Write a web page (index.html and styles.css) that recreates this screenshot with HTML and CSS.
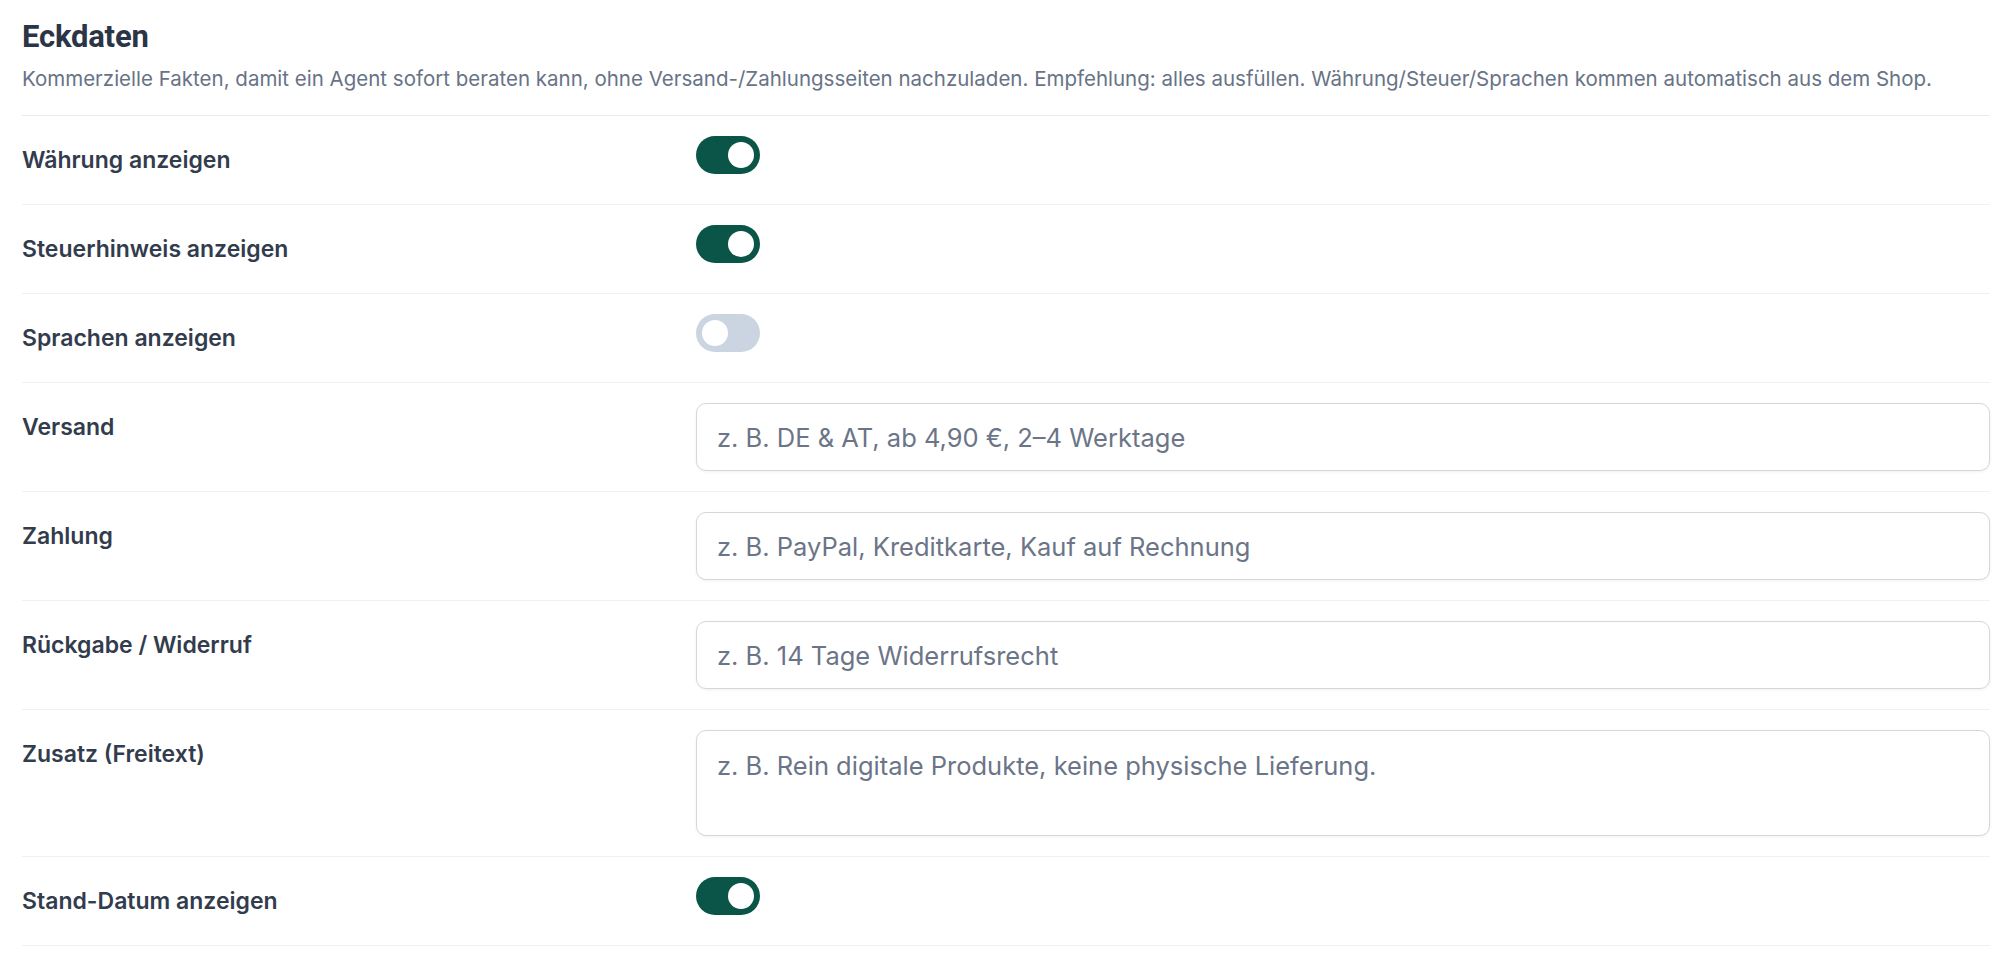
FILE: index.html
```html
<!DOCTYPE html>
<html lang="de">
<head>
    <meta charset="UTF-8">
    <meta name="viewport" content="width=device-width, initial-scale=1.0">
    <title>Eckdaten</title>
    <link rel="stylesheet" href="styles.css">
</head>
<body>
    <section class="facts">
        <div class="facts-head">
            <h2>Eckdaten</h2>
            <p class="facts-desc">Kommerzielle Fakten, damit ein Agent sofort beraten kann, ohne Versand-/Zahlungsseiten nachzuladen. Empfehlung: alles ausfüllen. Währung/Steuer/Sprachen kommen automatisch aus dem Shop.</p>
        </div>

        <div class="field-row">
            <div class="field-label">Währung anzeigen</div>
            <div class="field-control"><span class="toggle on"><span class="knob"></span></span></div>
        </div>
        <div class="field-row">
            <div class="field-label">Steuerhinweis anzeigen</div>
            <div class="field-control"><span class="toggle on"><span class="knob"></span></span></div>
        </div>
        <div class="field-row">
            <div class="field-label">Sprachen anzeigen</div>
            <div class="field-control"><span class="toggle"><span class="knob"></span></span></div>
        </div>
        <div class="field-row">
            <div class="field-label">Versand</div>
            <div class="field-control"><input type="text" class="text-input" placeholder="z. B. DE &amp; AT, ab 4,90 €, 2–4 Werktage"></div>
        </div>
        <div class="field-row">
            <div class="field-label">Zahlung</div>
            <div class="field-control"><input type="text" class="text-input" placeholder="z. B. PayPal, Kreditkarte, Kauf auf Rechnung"></div>
        </div>
        <div class="field-row">
            <div class="field-label">Rückgabe / Widerruf</div>
            <div class="field-control"><input type="text" class="text-input" placeholder="z. B. 14 Tage Widerrufsrecht"></div>
        </div>
        <div class="field-row">
            <div class="field-label">Zusatz (Freitext)</div>
            <div class="field-control"><textarea class="text-area" placeholder="z. B. Rein digitale Produkte, keine physische Lieferung."></textarea></div>
        </div>
        <div class="field-row">
            <div class="field-label">Stand-Datum anzeigen</div>
            <div class="field-control"><span class="toggle on"><span class="knob"></span></span></div>
        </div>
    </section>
</body>
</html>
```

FILE: styles.css
```css
body {
    margin: 0;
    padding: 0 16px 0 22px;
    font-family: Inter, "Noto Sans", sans-serif;
    color: #2f3a4b;
    background: #ffffff;
}
.facts-head {
    padding: 19px 0 22px;
    border-bottom: 1px solid #e8ebef;
}
.facts-head h2 {
    margin: 0;
    font-family: Roboto, Inter, sans-serif;
    font-size: 31px;
    line-height: 36px;
    font-weight: 700;
    letter-spacing: -0.2px;
    color: #2b3546;
}
.facts-desc {
    margin: 10px 0 0;
    font-size: 20.5px;
    line-height: 28px;
    color: #687386;
}
.field-row {
    display: grid;
    grid-template-columns: 674px 1fr;
    align-items: start;
    padding: 20px 0;
    border-bottom: 1px solid #eef0f3;
}
.field-label {
    padding: 10px 0;
    font-size: 23px;
    line-height: 28px;
    font-weight: 600;
    color: #323c4d;
}
.toggle {
    display: flex;
    align-items: center;
    width: 64px;
    height: 38px;
    padding: 0 6px;
    box-sizing: border-box;
    border-radius: 19px;
    background: #cbd5e1;
}
.toggle .knob {
    width: 26px;
    height: 26px;
    border-radius: 50%;
    background: #ffffff;
}
.toggle.on {
    background: #0b5448;
    justify-content: flex-end;
}
.text-input,
.text-area {
    display: block;
    width: 100%;
    box-sizing: border-box;
    padding: 19px 20px;
    border: 1px solid #d3d7de;
    border-radius: 10px;
    box-shadow: 0 1px 3px rgba(15, 23, 42, 0.06);
    font-family: Inter, "Noto Sans", sans-serif;
    font-size: 25.5px;
    line-height: 28px;
    color: #2f3a4b;
    background: #ffffff;
}
.text-input {
    height: 68px;
}
.text-area {
    height: 106px;
    padding-top: 21px;
    resize: none;
}
.text-input::placeholder,
.text-area::placeholder {
    color: #6b7587;
}
```
